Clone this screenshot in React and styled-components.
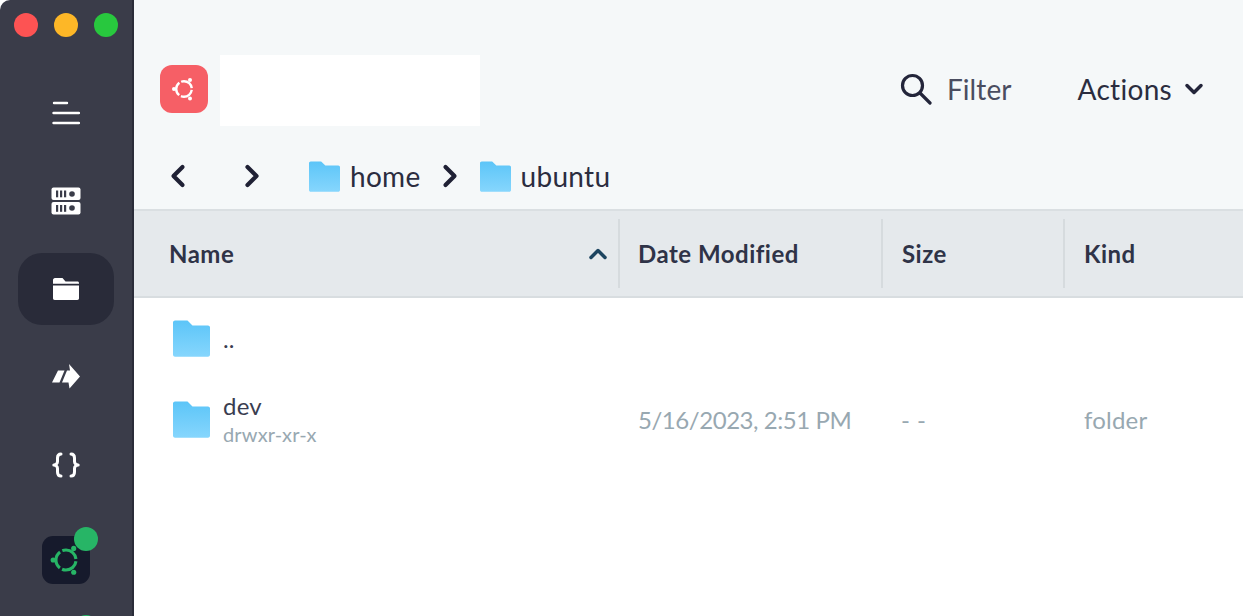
import React from "react";
import styled, { createGlobalStyle } from "styled-components";
import { ChevronLeft, ChevronRight, ChevronDown, ChevronUp } from "lucide-react";

const Global = createGlobalStyle`
  html, body { margin: 0; padding: 0; background: #fff; overflow: hidden; }
  body { font-family: Lato, "Open Sans", sans-serif; }
`;

const Window = styled.div`
  display: flex;
  width: 1243px;
  height: 616px;
  overflow: hidden;
`;

const Sidebar = styled.aside`
  width: 134px;
  height: 616px;
  flex: none;
  box-sizing: border-box;
  padding-right: 1px;
  background: #3a3c49;
  border-right: 2px solid #2a2c39;
  border-top-left-radius: 10px;
  display: flex;
  flex-direction: column;
  align-items: center;
  overflow: hidden;
`;

const Lights = styled.div`
  display: flex;
  gap: 16px;
  margin-top: 13px;
  height: 24px;
`;

const Light = styled.span`
  width: 24px;
  height: 24px;
  border-radius: 50%;
  background: ${(p) => p.$color};
`;

const NavList = styled.nav`
  display: flex;
  flex-direction: column;
  align-items: center;
  margin-top: 40px;
`;

const NavItem = styled.div`
  width: 96px;
  height: ${(p) => p.$h}px;
  flex: none;
  display: flex;
  align-items: center;
  justify-content: center;
  background: ${(p) => (p.$active ? "#292b39" : "transparent")};
  border-radius: 24px;
  margin-bottom: ${(p) => p.$mb || 0}px;
`;

const HostTile = styled.div`
  position: relative;
  width: 48px;
  height: 48px;
  flex: none;
  border-radius: 11px;
  background: #161a2c;
  display: flex;
  align-items: center;
  justify-content: center;
  margin-top: ${(p) => p.$mt}px;
`;

const Dot = styled.span`
  position: absolute;
  top: -9px;
  right: -8px;
  width: 24px;
  height: 24px;
  border-radius: 50%;
  background: #27b566;
`;

const Main = styled.main`
  flex: 1;
  min-width: 0;
  display: flex;
  flex-direction: column;
  background: #fff;
`;

const Top = styled.div`
  background: #f5f8f9;
  height: 209px;
  flex: none;
  box-sizing: border-box;
  padding: 55px 35px 0 26px;
  display: flex;
  flex-direction: column;
`;

const Header = styled.header`
  display: flex;
  align-items: center;
  height: 71px;
`;

const Logo = styled.div`
  width: 48px;
  height: 48px;
  border-radius: 12px;
  background: #f65f66;
  display: flex;
  align-items: center;
  justify-content: center;
  margin-bottom: 3px;
`;

const Redacted = styled.div`
  width: 260px;
  height: 71px;
  background: #fff;
  margin-left: 12px;
`;

const Spacer = styled.div`
  flex: 1;
`;

const FilterBox = styled.div`
  display: flex;
  align-items: center;
  gap: 15px;
  margin-right: 66px;
  margin-bottom: 4px;
  color: #4a4d60;
  font-size: 28px;
  letter-spacing: 0.1px;
`;

const ActionsBox = styled.div`
  display: flex;
  align-items: center;
  gap: 8px;
  margin-bottom: 4px;
  color: #2b2d3f;
  font-size: 28px;
  letter-spacing: 0.3px;
`;

const Crumbs = styled.div`
  display: flex;
  align-items: center;
  height: 60px;
  margin-top: 20px;
  color: #2b2d3f;
  font-size: 28px;
  letter-spacing: 0.3px;
`;

const NavArrows = styled.div`
  display: flex;
  gap: 38px;
  margin-right: 39px;
`;

const Crumb = styled.div`
  display: flex;
  align-items: center;
  gap: 10px;
`;

const CrumbSep = styled.div`
  display: flex;
  margin: 0 12px 0 11px;
`;

const HeadRow = styled.div`
  display: grid;
  grid-template-columns: 486px 263px 182px 1fr;
  height: 89px;
  flex: none;
  box-sizing: border-box;
  background: #e5e9ec;
  border-top: 2px solid #dadfe2;
  border-bottom: 2px solid #d8dde0;
  align-items: center;
`;

const HeadCell = styled.div`
  height: 69px;
  display: flex;
  align-items: center;
  justify-content: space-between;
  box-sizing: border-box;
  padding-left: ${(p) => p.$pl}px;
  padding-right: 6px;
  border-right: ${(p) => (p.$last ? "none" : "2px solid #d6dbde")};
  color: #2f3347;
  font-size: 24px;
  font-weight: 700;
  letter-spacing: 0.5px;
`;

const Row = styled.div`
  display: grid;
  grid-template-columns: 486px 263px 182px 1fr;
  height: 81px;
  align-items: center;
`;

const NameCell = styled.div`
  display: flex;
  align-items: center;
  gap: 13px;
  padding-left: 39px;
`;

const NameText = styled.div`
  display: flex;
  flex-direction: column;
`;

const FileName = styled.div`
  font-size: 24px;
  line-height: 27px;
  letter-spacing: 0.2px;
  color: #3a3d50;
`;

const Perms = styled.div`
  font-size: 20px;
  line-height: 27px;
  margin-top: 2px;
  letter-spacing: 0.15px;
  color: #98a8b1;
`;

const Meta = styled.div`
  font-size: 24px;
  color: #98a8b1;
  padding-left: ${(p) => p.$pl}px;
  letter-spacing: ${(p) => p.$ls || 0}px;
`;

function Folder({ size = 37, id }) {
  return (
    <svg width={size} height={size} viewBox="0 0 37 37" style={{ flex: "none" }}>
      <defs>
        <linearGradient id={id} x1="0" y1="0" x2="0" y2="1">
          <stop offset="0" stopColor="#5cc5f8" />
          <stop offset="1" stopColor="#86d6fd" />
        </linearGradient>
      </defs>
      <path
        d="M2 0.5H14.5L19.5 5.5H35C36 5.5 37 6.4 37 7.5V34.5C37 35.8 36 36.8 35 36.8H2C1 36.8 0 35.8 0 34.5V2.5C0 1.4 1 0.5 2 0.5Z"
        fill={`url(#${id})`}
      />
    </svg>
  );
}

function Ubuntu({ color, size = 28 }) {
  return (
    <svg width={size} height={size} viewBox="0 0 28 28" fill="none">
      <circle cx="14" cy="14" r="7.8" stroke={color} strokeWidth="2.4" strokeDasharray="14.3 2" strokeDashoffset="-1" />
      <circle cx="4" cy="14" r="2" fill={color} />
      <circle cx="20" cy="5" r="2" fill={color} />
      <circle cx="20" cy="23.5" r="2" fill={color} />
    </svg>
  );
}

const Burger = () => (
  <svg width="28" height="24" viewBox="0 0 28 24" fill="none" stroke="#fff" strokeWidth="2.4" strokeLinecap="round">
    <path d="M2 2H15M1.5 12H27M1.5 22H27" />
  </svg>
);

const Servers = () => (
  <svg width="30" height="28" viewBox="0 0 30 28">
    <rect x="0.5" y="0.5" width="29" height="12.6" rx="2" fill="#fff" />
    <rect x="0.5" y="15" width="29" height="12.6" rx="2" fill="#fff" />
    <g fill="#3a3c49">
      <rect x="5" y="3.5" width="2.2" height="6.8" />
      <rect x="9" y="3.5" width="2.2" height="6.8" />
      <rect x="13" y="3.5" width="2.2" height="6.8" />
      <circle cx="21" cy="7" r="2.8" />
      <rect x="5" y="18" width="2.2" height="6.8" />
      <rect x="9" y="18" width="2.2" height="6.8" />
      <rect x="13" y="18" width="2.2" height="6.8" />
      <circle cx="21" cy="21" r="2.8" />
    </g>
  </svg>
);

const SideFolder = () => (
  <svg width="26" height="22" viewBox="0 0 26 22" fill="#fff">
    <path d="M0 2C0 1 .8 0 2 0H9.5L12.5 3.5H24.5C25.4 3.5 26 4.2 26 5V5.8H0Z" />
    <path d="M0 7.6H26V20.3C26 21.2 25.3 22 24.4 22H1.6C.7 22 0 21.2 0 20.3Z" />
  </svg>
);

const Forward = () => (
  <svg width="28" height="25" viewBox="0 0 28 25" fill="#fff">
    <path d="M6 6.5H12.5L7.5 18.5H0Z" />
    <path d="M17 0L28 12.5L17.5 24.5L16.5 18.5H10L15 6.5H18Z" />
  </svg>
);

const Braces = () => (
  <svg width="28" height="26" viewBox="0 0 28 26" fill="none" stroke="#fff" strokeWidth="3" strokeLinecap="round" strokeLinejoin="round">
    <path d="M9 2C6 2 5.5 3.5 5.5 6V9.5C5.5 11.5 4 13 1.8 13C4 13 5.5 14.5 5.5 16.5V20C5.5 22.5 6 24 9 24" />
    <path d="M19 2C22 2 22.5 3.5 22.5 6V9.5C22.5 11.5 24 13 26.2 13C24 13 22.5 14.5 22.5 16.5V20C22.5 22.5 22 24 19 24" />
  </svg>
);

const SearchGlyph = () => (
  <svg width="32" height="32" viewBox="0 0 32 32" fill="none" stroke="#23253a" strokeWidth="3.2" strokeLinecap="round" style={{ flex: "none" }}>
    <circle cx="12.5" cy="12.5" r="10" />
    <path d="M20 20L30 30" />
  </svg>
);

export default function App() {
  return (
    <>
      <Global />
      <Window>
        <Sidebar>
          <Lights>
            <Light $color="#fd5353" />
            <Light $color="#fdb727" />
            <Light $color="#28c83e" />
          </Lights>
          <NavList>
            <NavItem $h={72} $mb={16}><Burger /></NavItem>
            <NavItem $h={72} $mb={16}><Servers /></NavItem>
            <NavItem $h={72} $active><SideFolder /></NavItem>
            <NavItem $h={102}><Forward /></NavItem>
            <NavItem $h={75}><Braces /></NavItem>
          </NavList>
          <HostTile $mt={34}>
            <Ubuntu color="#27b566" size={36} />
            <Dot />
          </HostTile>
          <HostTile $mt={40}>
            <Dot />
          </HostTile>
        </Sidebar>
        <Main>
          <Top>
            <Header>
              <Logo><Ubuntu color="#fff" /></Logo>
              <Redacted />
              <Spacer />
              <FilterBox>
                <SearchGlyph />
                Filter
              </FilterBox>
              <ActionsBox>
                Actions
                <ChevronDown size={28} strokeWidth={3} color="#23253a" />
              </ActionsBox>
            </Header>
            <Crumbs>
              <NavArrows>
                <ChevronLeft size={36} strokeWidth={2.8} color="#1f2135" />
                <ChevronRight size={36} strokeWidth={2.8} color="#1f2135" />
              </NavArrows>
              <Crumb><Folder size={31} id="c1" />home</Crumb>
              <CrumbSep><ChevronRight size={36} strokeWidth={2.8} color="#1f2135" /></CrumbSep>
              <Crumb><Folder size={31} id="c2" />ubuntu</Crumb>
            </Crumbs>
          </Top>
          <HeadRow>
            <HeadCell $pl={35}>
              Name
              <ChevronUp size={28} strokeWidth={3} color="#1d4560" />
            </HeadCell>
            <HeadCell $pl={18}>Date Modified</HeadCell>
            <HeadCell $pl={19}>Size</HeadCell>
            <HeadCell $pl={19} $last>Kind</HeadCell>
          </HeadRow>
          <Row>
            <NameCell>
              <Folder id="r1" />
              <NameText><FileName>..</FileName></NameText>
            </NameCell>
          </Row>
          <Row>
            <NameCell>
              <Folder id="r2" />
              <NameText>
                <FileName>dev</FileName>
                <Perms>drwxr-xr-x</Perms>
              </NameText>
            </NameCell>
            <Meta $pl={18} $ls={-0.45}>5/16/2023, 2:51 PM</Meta>
            <Meta $pl={18} $ls={0.5}>- -</Meta>
            <Meta $pl={19} $ls={0.2}>folder</Meta>
          </Row>
        </Main>
      </Window>
    </>
  );
}
